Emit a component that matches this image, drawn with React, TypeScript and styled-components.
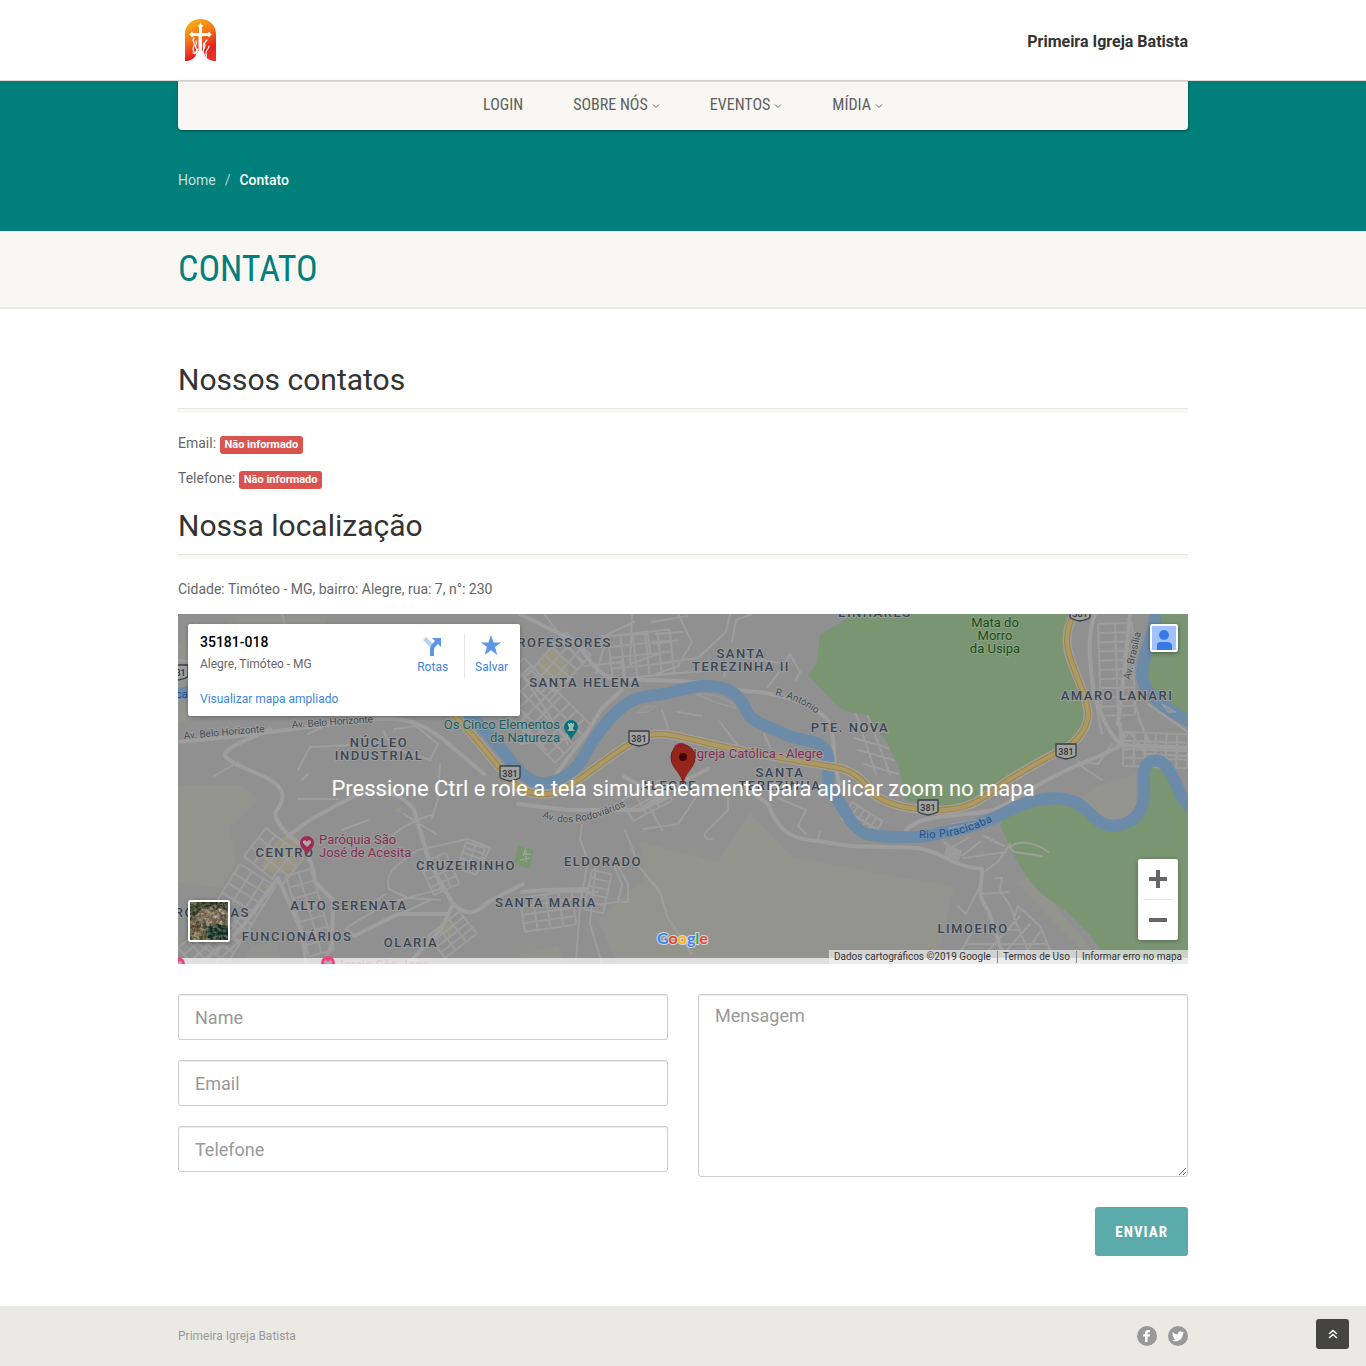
import React from "react";
import styled, { createGlobalStyle } from "styled-components";

const GlobalStyle = createGlobalStyle`
  *, *::before, *::after { box-sizing: border-box; }
  body {
    margin: 0;
    background: #fff;
    color: #666;
    font: 14px/20px Roboto, "Liberation Sans", sans-serif;
  }
  a { color: inherit; text-decoration: none; }
`;

const condensed = `"Roboto Condensed", Roboto, "Liberation Sans Narrow", sans-serif`;

const Container = styled.div`
  width: 100%;
  max-width: 1040px;
  margin: 0 auto;
  padding: 0 15px;
`;

/* ---------- header ---------- */

const TopBar = styled.header`
  border-bottom: 1px solid #dddcd8;
  background: #fff;
`;

const TopRow = styled(Container)`
  display: flex;
  align-items: center;
  justify-content: space-between;
  height: 80px;
`;

const LogoLink = styled.a`
  display: block;
  padding: 0 6px;
  svg { display: block; }
`;

const ChurchName = styled.strong`
  padding-top: 3px;
  color: #333;
  font-size: 16px;
  font-weight: 700;
`;

const Hero = styled.div`
  background: #007f7b;
  height: 150px;
`;

const NavBar = styled.nav`
  display: flex;
  justify-content: center;
  gap: 50px;
  height: 49px;
  padding-top: 14px;
  border-radius: 0 0 4px 4px;
  background: #f8f7f3;
  box-shadow: inset 0 1px 0 #dddcd8, 0 1px 3px rgba(0, 0, 0, 0.4);
`;

const NavLink = styled.a`
  display: flex;
  align-items: center;
  gap: 4px;
  height: 20px;
  color: #5e5e5e;
  font-family: ${condensed};
  font-size: 16px;
  text-transform: uppercase;
`;

const Crumbs = styled.ol`
  display: flex;
  margin: 0;
  padding: 40px 0 0;
  list-style: none;
  color: #fff;
  li + li::before {
    content: "/";
    padding: 0 9px;
    color: #b5d3cf;
    font-weight: 400;
  }
`;

const Crumb = styled.li<{ $muted?: boolean }>`
  color: ${(p) => (p.$muted ? "#c8dfdb" : "#fff")};
  font-weight: ${(p) => (p.$muted ? 400 : 500)};
`;

const TitleBand = styled.div`
  border-bottom: 2px solid #e9e8e4;
  background: #f8f7f3;
`;

const PageTitle = styled.h1`
  margin: 0;
  padding: 18px 0;
  color: #007f7b;
  font-family: ${condensed};
  font-size: 36px;
  font-weight: 400;
  line-height: 40px;
  text-transform: uppercase;
`;

/* ---------- content ---------- */

const Main = styled.main`
  padding: 48px 0 50px;
`;

const SectionTitle = styled.h2`
  margin: 0 0 20px;
  padding: 6px 0 12px;
  border-bottom: 4px solid #f8f7f3;
  box-shadow: inset 0 -1px 0 #e7e6e1;
  color: #333;
  font-size: 30px;
  font-weight: 400;
  line-height: 34px;
`;

const Line = styled.p`
  margin: 0 0 15px;
`;

const Tag = styled.span`
  padding: 2px 5px 3px;
  border-radius: 3px;
  background: #d9534f;
  color: #fff;
  font-size: 11px;
  font-weight: 700;
  line-height: 11px;
`;

/* ---------- map ---------- */

const MapFrame = styled.section`
  position: relative;
  height: 350px;
  margin-bottom: 30px;
  overflow: hidden;
  background: #8f8f8f;
`;

const MapArt = styled.svg`
  display: block;
  width: 100%;
  height: 100%;
  font-family: Roboto, sans-serif;
`;

const ScrollHint = styled.p`
  position: absolute;
  inset: 0;
  display: flex;
  align-items: center;
  justify-content: center;
  margin: 0;
  color: #fff;
  font-size: 22px;
  line-height: 26px;
`;

const PlaceCard = styled.div`
  position: absolute;
  top: 10px;
  left: 10px;
  display: flex;
  justify-content: space-between;
  width: 332px;
  height: 92px;
  padding: 10px 0 0 12px;
  border-radius: 2px;
  background: #fff;
  box-shadow: 0 1px 4px rgba(0, 0, 0, 0.3);
  font-size: 12px;
  line-height: 16px;
`;

const PlaceText = styled.div`
  display: flex;
  flex-direction: column;
  align-items: flex-start;
`;

const PlaceName = styled.div`
  margin-bottom: 6px;
  color: #000;
  font-size: 14px;
  font-weight: 500;
`;

const MapLink = styled.a`
  margin-top: 19px;
  color: #3a84df;
`;

const PlaceActions = styled.div`
  display: flex;
`;

const PlaceAction = styled.button`
  display: flex;
  flex-direction: column;
  align-items: center;
  gap: 3px;
  height: 44px;
  padding: 0 12px 0 10px;
  border: 0;
  background: none;
  color: #3a84df;
  font: 12px/16px Roboto, sans-serif;
  svg { display: block; }
  & + & { border-left: 1px solid #e8e8e8; }
  &:first-child { padding-right: 16px; }
`;

const Corner = styled.button<{ $place: "account" | "layers" }>`
  position: absolute;
  ${(p) => (p.$place === "account" ? "top: 10px; right: 10px; width: 28px; height: 28px;" : "bottom: 22px; left: 10px; width: 42px; height: 42px;")}
  padding: 0;
  border: 2px solid #fff;
  border-radius: 2px;
  background: #a0c3ff;
  box-shadow: 0 1px 4px rgba(0, 0, 0, 0.4);
  overflow: hidden;
  svg { display: block; width: 100%; height: 100%; }
`;

const ZoomBox = styled.div`
  position: absolute;
  right: 10px;
  bottom: 24px;
  display: flex;
  flex-direction: column;
  width: 40px;
  padding: 0 5px;
  border-radius: 2px;
  background: #fff;
  box-shadow: 0 1px 4px rgba(0, 0, 0, 0.3);
`;

const ZoomButton = styled.button`
  display: flex;
  align-items: center;
  justify-content: center;
  height: 40px;
  padding: 0;
  border: 0;
  background: none;
  color: #666;
  & + & { height: 41px; border-top: 1px solid #e6e6e6; }
`;

const Credits = styled.div`
  position: absolute;
  right: 0;
  bottom: 0;
  display: flex;
  height: 14px;
  padding: 1px 0;
  background: rgba(245, 245, 245, 0.65);
  color: #333;
  font-size: 10px;
  line-height: 12px;
`;

const Credit = styled.a`
  padding: 0 6px 0 5px;
  & + & { border-left: 1px solid #888; }
`;

/* ---------- form ---------- */

const Form = styled.form`
  display: grid;
  grid-template-columns: 1fr 1fr;
  column-gap: 30px;
  row-gap: 30px;
`;

const Fields = styled.div`
  display: flex;
  flex-direction: column;
  gap: 20px;
`;

const fieldStyle = `
  display: block;
  width: 100%;
  border: 1px solid #ccc;
  border-radius: 3px;
  background: #fff;
  box-shadow: inset 0 1px 1px rgba(0, 0, 0, 0.075);
  color: #555;
  font: 18px/24px Roboto, sans-serif;
  &::placeholder { color: #999; opacity: 1; }
`;

const Input = styled.input`
  ${fieldStyle}
  height: 46px;
  padding: 10px 16px;
`;

const Message = styled.textarea`
  ${fieldStyle}
  height: 183px;
  padding: 9px 16px;
`;

const Submit = styled.button`
  grid-column: 2;
  justify-self: end;
  height: 49px;
  padding: 0 20px;
  border: 0;
  border-radius: 3px;
  background: #5aaba9;
  color: #fff;
  font: 700 15px/20px ${condensed};
  letter-spacing: 1px;
  text-transform: uppercase;
`;

/* ---------- footer ---------- */

const Footer = styled.footer`
  background: #eae9e4;
  color: #999;
  font-size: 12px;
`;

const FooterRow = styled(Container)`
  display: flex;
  align-items: center;
  justify-content: space-between;
  height: 60px;
`;

const Social = styled.div`
  display: flex;
  gap: 11px;
`;

const SocialLink = styled.a`
  display: flex;
  align-items: center;
  justify-content: center;
  width: 20px;
  height: 20px;
  border-radius: 50%;
  background: #999;
  color: #fff;
`;

const ToTop = styled.button`
  position: fixed;
  right: 17px;
  bottom: 17px;
  display: flex;
  align-items: center;
  justify-content: center;
  width: 33px;
  height: 30px;
  padding: 0;
  border: 0;
  border-radius: 3px;
  background: #444441;
  color: #fff;
`;

/* ---------- drawings ---------- */

const Logo = () => (
  <svg width="33" height="44" viewBox="0 0 33 44" role="img" aria-label="Primeira Igreja Batista">
    <defs>
      <linearGradient id="flame" x1="0.2" y1="0" x2="0.6" y2="1">
        <stop offset="0" stopColor="#f9b710" />
        <stop offset="0.45" stopColor="#f0701c" />
        <stop offset="0.8" stopColor="#e4201f" />
        <stop offset="1" stopColor="#e8302a" />
      </linearGradient>
    </defs>
    <path d="M1 43V16C1 7 8 1 16.500 1S32 7 32 16V43C27 43 23 41 21 38L19 33H14L12 37C10 41 6 43 1 43Z" fill="url(#flame)" />
    <g fill="#fff">
      <path d="M15 9 13.500 7.500 15 7 16.500 5 18 7 19.500 7.500 18 9V15H24L25 13.500 26 15 28 16.500 26 18 25 19.500 24 18H18V40H14.500V18H9L8 19.500 7 18 5 16.500 7 15 8 13.500 9 15H15Z" />
    </g>
    <g fill="none" stroke="#fff" strokeWidth="1.200" strokeLinecap="round">
      <path d="M10 20c-3 3 2 5 0 8s-1 5 1 7M12 23c2 3-2 5 0 7s1 3-1 5" />
      <path d="M23 22c-5 4 0 5-3 9s1 3 0 8M25 28c0 3-3 4-3 7s1 2 0 4M20 25c-2 4 1 5-1 8M9 35c3 2 5-1 4-4" />
    </g>
  </svg>
);

const Caret = () => (
  <svg width="8" height="8" viewBox="0 0 8 8" fill="none" stroke="#666" aria-hidden="true">
    <path d="M1 3.500 4 6.500 7 3.500" />
  </svg>
);

type LabelProps = { x: number; y: number; text: string; anchor?: "start" | "middle" | "end" };

const Area = ({ x, y, text, anchor = "middle" }: LabelProps) => (
  <text x={x} y={y} textAnchor={anchor} fontSize="13" fontWeight="500" letterSpacing="1.500" fill="#3b4654" stroke="#9d9d9d" strokeWidth="2" paintOrder="stroke">
    {text}
  </text>
);

const Place = ({ x, y, text, anchor = "start", color }: LabelProps & { color: string }) => (
  <text x={x} y={y} textAnchor={anchor} fontSize="13" fill={color} stroke="#9d9d9d" strokeWidth="2" paintOrder="stroke">
    {text}
  </text>
);

const Shield = ({ x, y }: { x: number; y: number }) => (
  <g transform={`translate(${x} ${y})`}>
    <path d="M-10-7H10V4Q10 6 0 8Q-10 6-10 4Z" fill="#a1a1a1" stroke="#383e43" strokeWidth="1.300" strokeLinejoin="round" />
    <text y="4" textAnchor="middle" fontSize="9" fontWeight="500" fill="#333">381</text>
  </g>
);

const HeartPin = ({ x, y, color }: { x: number; y: number; color: string }) => (
  <g transform={`translate(${x} ${y})`}>
    <path d="M0 12C-2 7-7 5-7 0A7 7 0 0 1 7 0C7 5 2 7 0 12Z" fill={color} />
    <path d="M0 4-4 0C-5-3-1-4 0-1 1-4 5-3 4 0Z" fill="#b9a7ae" />
  </g>
);

type GridProps = { x: number; y: number; w: number; h: number; turn: number; cols: number; rows: number };

/* a neighbourhood of parallel streets */
const Blocks = ({ x, y, w, h, turn, cols, rows }: GridProps) => {
  let d = "";
  for (let i = 0; i <= cols; i++) d += `M${(w * i) / cols} 0V${h}`;
  for (let j = 0; j <= rows; j++) d += `M0 ${(h * j) / rows}H${w}`;
  return <path d={d} transform={`translate(${x} ${y}) rotate(${turn})`} />;
};

const river =
  "M-2 80 12 78M286 95C300 108 318 128 332 146C342 158 352 170 366 169C384 168 396 158 405 144C414 127 426 109 442 95C454 84 466 82 486 80C500 77 512 72 528 72C548 72 562 80 568 96C574 110 592 112 606 120C622 128 646 124 650 142C652 158 646 170 658 184C668 196 672 212 688 220C704 223 744 226 762 219C792 214 814 206 832 196C852 186 882 178 902 191C914 199 920 212 936 212C952 210 966 202 966 178V158C968 146 980 142 989 153C999 165 1000 184 1012 192M977-3C978 22 964 38 964 62C966 80 984 92 1012 108";
const highway =
  "M270 95C292 116 306 136 322 154C336 174 354 184 376 179C404 168 428 142 462 124C478 116 496 121 525 128C565 138 615 146 650 152C678 155 686 168 698 182C716 194 742 196 760 196C796 196 806 182 832 165C852 153 866 145 880 138C900 130 914 110 909 92C904 68 890 48 889 28C889 14 892 8 898-4";

const MapPicture = () => (
  <MapArt viewBox="0 0 1010 350" preserveAspectRatio="xMidYMid slice" role="img" aria-label="Mapa de Alegre, Timóteo - MG">
    <defs>
      <path id="rodoviarios" d="M364 203Q396 219 456 188" />
      <path id="piracicaba" d="M741 224Q782 226 820 204" />
      <path id="antonio" d="M597 81Q622 86 644 104" />
    </defs>
    <rect width="1010" height="350" fill="#909090" />

    <g fill="#94948f">
      <path d="M0 171H62L80 186 52 214 58 248 44 274 0 268Z" />
      <path d="M462 228 540 248 572 199 614 243 682 256 776 273 758 350H440L420 306 448 280 466 266Z" />
      <path d="M0 30 60 4H150L118 60 40 100 0 108Z" />
      <path d="M62 350 74 332 98 328 104 350ZM342 340 380 332 386 350H342Z" />
      <path d="M900 188 915 174 958 160V200L935 208 920 204Z" />
      <path d="M838 268 852 262 922 345H912Z" />
    </g>
    <g fill="#999684">
      <path d="M83 252 98 228 114 216 128 240 114 256 96 260ZM84 268 98 274 92 282ZM258 318 264 306 276 312 272 322ZM360 52 376 30 392 58 372 80ZM218 194H224V198H218Z" />
    </g>
    <g fill="#7a9571">
      <path d="M682 0 670 4 642 21 639 49 630 61 660 93 672 98 689 101 709 129 722 156 727 186 760 194 796 188 830 166 880 138 902 126 910 103 902 76 889 43 889 23 895 0Z" />
      <path d="M822 211 835 194 872 188 905 193 922 209 935 213 959 203 965 171 974 150 989 160 1003 180 1010 190V350H934L912 321 889 298 859 276 839 248 832 233Z" />
      <path d="M974 0H1010V106L969 79 962 59Z" />
      <path d="M340 231 355 236 352 255 336 250Z" />
    </g>

    <g fill="none" stroke="#9e9e9e" strokeWidth="2" strokeLinecap="round" strokeLinejoin="round">
      <g strokeWidth="4">
        <path d="M0 128 60 122 130 113 192 106C225 101 246 110 266 126L306 160" />
        <path d="M92 115C76 124 45 133 47 142C55 153 86 159 98 170C110 181 103 190 97 199C98 210 110 222 122 230C130 240 136 251 137 268L155 286 154 330 145 350" />
        <path d="M342 0 370 14 398 28C410 44 418 58 434 65L500 67C530 68 548 76 580 78C610 82 632 90 648 104C660 120 652 145 662 170" />
        <path d="M110 222 135 204 180 180C205 174 225 180 236 196L252 250 275 290C290 304 300 298 310 288L345 270" />
        <path d="M568 174 590 190C600 216 612 224 632 226L672 232 740 234C770 240 772 252 804 255C806 266 796 278 810 296L828 350" />
        <path d="M100 264 124 318 128 350M100 264 62 316 22 350M344 278 368 276 408 275M275 290 264 314 230 350M176 322 220 300 270 300" />
        <path d="M728 216C746 198 780 204 816 196 850 180 860 166 924 141L944 131 942 110M944 131 1010 134" />
        <path d="M917 0C908 20 912 54 916 80 924 102 928 115 942 130M952 0 946 60 940 110M342 160 360 173 374 166 408 120 424 94 444 76" />
        <path d="M446 163 488 184 462 196 390 196 340 190M462 196 500 170 530 155" />
      </g>
      <path d="M404 211 402 225 410 247 402 290 398 348M447 216 462 254 482 278 490 304 514 340M360 288 372 278H420M418 250 412 310 424 350M436 252 444 270 440 288 424 290M440 252 450 270V288H444" />
      <path d="M211 275C206 260 218 250 240 236L290 225 312 234 304 250M211 275 230 284 262 286M168 314 208 290 262 275M168 314 176 322 252 286M184 296 208 280" />
      <path d="M120 156 132 133 198 130M124 166 130 160M104 0 112 26 140 30 M36 162 60 148M130 120 150 110M216 115 238 112 260 130 252 146 234 140 214 134 206 118M262 150 260 184 254 204" />
      <path d="M480 40 452 50 454 0M424 22 470 20 472 38M476 50 520 44 548 18 552 0M500 0 514 28 500 52 478 60M554 28 558 6 574 0M474 8 510 2M478 20 504 18M476 30 500 26" />
      <path d="M590 73 604 54 612 40 622 58 618 66M568 44 610 50M546 62 548 50M446 68 444 48 406 52 366 0M418 60 430 20 456 8" />
      <path d="M466 215 500 210 520 180M472 194 484 216 M550 184V196L532 214C522 222 528 226 534 225M600 184 628 196 620 212 628 220M640 225 642 218M490 60 540 56M484 96 490 114M500 98 524 102M542 108 560 132M586 120 596 142" />
      <path d="M772 234 790 224M766 228 776 236M832 230 820 248 808 256M832 233C840 226 858 228 870 238M832 233 836 238 864 242M806 222 826 232M786 244 828 238M784 242 802 228" />
      <path d="M802 272 788 300 780 292M804 280 830 278M818 264H824L822 276 832 292 836 302M840 292 862 312 878 350M840 292 836 304 856 350M842 302 798 350M852 310 822 344M862 318 840 350M796 316H842M790 330H868M776 350 794 318" />
      <path d="M934 130 920 150 900 148M940 130 952 118 968 140 1010 142M916 80 924 120M970 90 1010 118M960 104 974 134M956 88 970 128M924 166 900 150" />
      <path d="M678 100 698 160M672 110 706 118M676 124 710 134M680 136 716 146M686 150 720 160M690 102 712 160M204 178 230 174M120 185H160M226 200 258 220M164 216 190 206M256 200C230 208 210 220 200 240" />
      <path d="M0 46 40 50M18 10 72 96M40 60 140 24M344 60 390 130M342 130 392 124M368 136 344 110" />
    </g>
    <g fill="none" stroke="#9d9d9d" strokeWidth="2">
      <Blocks x={920} y={10} w={34} h={92} turn={-2} cols={2} rows={10} />
      <Blocks x={346} y={44} w={96} h={52} turn={45} cols={9} rows={4} />
      <Blocks x={346} y={64} w={62} h={34} turn={-48} cols={6} rows={3} />
      <Blocks x={430} y={22} w={62} h={44} turn={-6} cols={5} rows={4} />
      <Blocks x={88} y={214} w={48} h={36} turn={38} cols={4} rows={3} />
      <Blocks x={62} y={250} w={42} h={90} turn={32} cols={3} rows={8} />
      <Blocks x={108} y={262} w={26} h={84} turn={-16} cols={2} rows={7} />
      <Blocks x={242} y={250} w={28} h={34} turn={-24} cols={3} rows={4} />
      <Blocks x={414} y={256} w={20} h={40} turn={12} cols={1} rows={5} />
      <Blocks x={288} y={228} w={20} h={28} turn={18} cols={2} rows={5} />
      <Blocks x={444} y={186} w={44} h={24} turn={-28} cols={3} rows={2} />
      <Blocks x={674} y={188} w={36} h={20} turn={32} cols={5} rows={2} />
      <Blocks x={946} y={118} w={64} h={34} turn={2} cols={6} rows={4} />
      <Blocks x={342} y={284} w={52} h={34} turn={-8} cols={4} rows={4} />
      <Blocks x={250} y={322} w={40} h={28} turn={-38} cols={3} rows={4} />
      <Blocks x={0} y={334} w={62} h={36} turn={-42} cols={5} rows={4} />
      <Blocks x={770} y={232} w={14} h={9} turn={20} cols={3} rows={4} />
    </g>

    <path d={river} fill="none" stroke="#6b8ba8" strokeWidth="12" strokeLinejoin="round" />
    <path d="M518 80C532 78 554 86 558 94L536 88ZM458 99 466 93 478 92 470 98ZM984 90 998 98 990 98Z" fill="#919191" stroke="#9e9e9e" />
    <path d="M772 210 812 203M768 215 800 208" stroke="#929da6" fill="none" />

    <g fill="none">
      <path d={highway} stroke="#9f9f9f" strokeWidth="9" />
      <path d={highway} stroke="#a6833f" strokeWidth="6" />
      <path d={highway} stroke="#aa9a66" strokeWidth="4" />
    </g>

    <Shield x={461} y={124} />
    <Shield x={332} y={159} />
    <Shield x={888} y={137} />
    <Shield x={750} y={193} />
    <Shield x={902} y={-1} />
    <Shield x={0} y={58} />

    <Area x={434} y={33} text="PROFESSORES" anchor="end" />
    <Area x={407} y={73} text="SANTA HELENA" />
    <Area x={563} y={44} text="SANTA" />
    <Area x={563} y={57} text="TEREZINHA II" />
    <Area x={697} y={3} text="LINHARES" />
    <Area x={672} y={118} text="PTE. NOVA" />
    <Area x={939} y={86} text="AMARO LANARI" />
    <Area x={201} y={133} text="NÚCLEO" />
    <Area x={201} y={146} text="INDUSTRIAL" />
    <Area x={602} y={163} text="SANTA" />
    <Area x={602} y={176} text="TEREZINHA" />
    <Area x={491} y={176} text="ALEGRE" />
    <Area x={107} y={243} text="CENTRO" />
    <Area x={288} y={256} text="CRUZEIRINHO" />
    <Area x={425} y={252} text="ELDORADO" />
    <Area x={171} y={296} text="ALTO SERENATA" />
    <Area x={368} y={293} text="SANTA MARIA" />
    <Area x={72} y={303} text="BROMÉLIAS" anchor="end" />
    <Area x={119} y={327} text="FUNCIONÁRIOS" />
    <Area x={233} y={333} text="OLARIA" />
    <Area x={795} y={319} text="LIMOEIRO" />

    <Place x={382} y={115} text="Os Cinco Elementos" anchor="end" color="#175e66" />
    <Place x={382} y={128} text="da Natureza" anchor="end" color="#175e66" />
    <Place x={645} y={144} text="Igreja Católica - Alegre" anchor="end" color="#842f50" />
    <Place x={141} y={230} text="Paróquia São" color="#842f50" />
    <Place x={141} y={243} text="José de Acesita" color="#842f50" />
    <Place x={162} y={355} text="Igreja São José" color="#a83560" />
    <g fontSize="13" textAnchor="middle" fill="#174e1c" stroke="#8ba184" strokeWidth="2" paintOrder="stroke">
      <text x="817" y="13">Mata do</text>
      <text x="817" y="26">Morro</text>
      <text x="817" y="39">da Usipa</text>
    </g>
    <g fontSize="10" fill="#454b52" stroke="#9e9e9e" strokeWidth="2" paintOrder="stroke">
      <text transform="translate(6 125) rotate(-5)">Av. Belo Horizonte</text>
      <text transform="translate(114 114) rotate(-4)">Av. Belo Horizonte</text>
      <text transform="translate(952 66) rotate(-77)">Av. Brasília</text>
      <text><textPath href="#antonio">R. António</textPath></text>
      <text><textPath href="#rodoviarios">Av. dos Rodoviários</textPath></text>
    </g>
    <text x="-8" y="84" fontSize="11" fill="#25508c">aca</text>
    <text fontSize="11" letterSpacing="0.500" fill="#25508c"><textPath href="#piracicaba">Rio Piracicaba</textPath></text>

    <g transform="translate(393 113)">
      <path d="M0 13C-2 7-7 5-7 0A7 7 0 0 1 7 0C7 5 2 7 0 13Z" fill="#08737c" />
      <path d="M-3-4H-2V-3H-1V-4H1V-3H2V-4H3V-1L2 0V2L4 4H-4L-2 2V0L-3-1Z" fill="#a7b4b6" />
    </g>
    <path d="M345 242 348 233M345 240H353M348 248V236M342 246 352 244" stroke="#a0a99d" />
    <HeartPin x={129} y={229} color="#9c2c51" />

    <circle cx="503" cy="137" r="8" fill="#9b1f4b" />
    <path d="M505 170C504 158 493 155 493 143A12 12 0 0 1 517 143C517 155 506 158 505 170Z" fill="#94261d" stroke="#7e1c17" />
    <circle cx="505" cy="143" r="4" fill="#400705" />

    <rect y="344" width="1010" height="6" fill="#fff" fillOpacity="0.700" />
    <HeartPin x={150} y={349} color="#ef4478" />
    <HeartPin x={0} y={350} color="#ef4478" />

    <text x="479" y="330" fontFamily="Lato, Roboto, sans-serif" fontSize="16" fontWeight="700" stroke="#d6d6d6" strokeWidth="2" paintOrder="stroke">
      <tspan fill="#4285f4">G</tspan>
      <tspan fill="#ea4335">o</tspan>
      <tspan fill="#fbbc05">o</tspan>
      <tspan fill="#4285f4">g</tspan>
      <tspan fill="#34a853">l</tspan>
      <tspan fill="#ea4335">e</tspan>
    </text>
  </MapArt>
);

const Satellite = () => (
  <svg viewBox="0 0 38 38" aria-hidden="true">
    <defs>
      <filter id="ground" x="0" y="0" width="100%" height="100%" colorInterpolationFilters="sRGB">
        <feTurbulence type="fractalNoise" baseFrequency="0.300" numOctaves="3" seed="8" />
        <feColorMatrix values="2 0 0 0 -0.65  2 0 0 0 -0.68  2 0 0 0 -0.75  0 0 0 0 0.35" />
      </filter>
    </defs>
    <rect width="38" height="38" fill="#77705a" />
    <path d="M0 0H38V7L28 9 20 4 8 10 0 18Z" fill="#3f4d33" />
    <path d="M8 12 18 7 30 12 32 20 22 24 10 18Z" fill="#9d8b76" />
    <path d="M18 24 28 22 38 25V38H20L14 31Z" fill="#153d33" />
    <path d="M0 22 8 20 15 28 17 38H0Z" fill="#776b4a" />
    <path d="M28 6 36 8 34 12 29 10ZM5 30 10 32 8 36 3 34Z" fill="#b5aa93" />
    <rect width="38" height="38" filter="url(#ground)" />
  </svg>
);

const links = [
  { label: "Login", menu: false },
  { label: "Sobre nós", menu: true },
  { label: "Eventos", menu: true },
  { label: "Mídia", menu: true },
];

export default function App() {
  return (
    <>
      <GlobalStyle />
      <TopBar>
        <TopRow>
          <LogoLink href="#"><Logo /></LogoLink>
          <ChurchName>Primeira Igreja Batista</ChurchName>
        </TopRow>
      </TopBar>

      <Hero>
        <Container>
          <NavBar aria-label="Principal">
            {links.map((link) => (
              <NavLink key={link.label} href="#">
                {link.label}
                {link.menu && <Caret />}
              </NavLink>
            ))}
          </NavBar>
          <Crumbs>
            <Crumb $muted><a href="#">Home</a></Crumb>
            <Crumb>Contato</Crumb>
          </Crumbs>
        </Container>
      </Hero>

      <TitleBand>
        <Container>
          <PageTitle>Contato</PageTitle>
        </Container>
      </TitleBand>

      <Main>
        <Container>
          <SectionTitle>Nossos contatos</SectionTitle>
          <Line>Email: <Tag>Não informado</Tag></Line>
          <Line>Telefone: <Tag>Não informado</Tag></Line>

          <SectionTitle>Nossa localização</SectionTitle>
          <Line>Cidade: Timóteo - MG, bairro: Alegre, rua: 7, n°: 230</Line>

          <MapFrame aria-label="Mapa">
            <MapPicture />
            <ScrollHint>Pressione Ctrl e role a tela simultaneamente para aplicar zoom no mapa</ScrollHint>
            <PlaceCard>
              <PlaceText>
                <PlaceName>35181-018</PlaceName>
                <div>Alegre, Timóteo - MG</div>
                <MapLink href="#">Visualizar mapa ampliado</MapLink>
              </PlaceText>
              <PlaceActions>
                <PlaceAction type="button">
                  <svg width="22" height="22" viewBox="0 0 22 22" aria-hidden="true">
                    <path d="M1 6 4 3 11 10 8 13Z" fill="#b6d1f6" />
                    <path d="M8 22V15Q8 12 10 10L13 7 10 4H19V13L16 10 13 13Q12 14 12 16V22Z" fill="#5b97e5" />
                  </svg>
                  Rotas
                </PlaceAction>
                <PlaceAction type="button">
                  <svg width="22" height="22" viewBox="0 0 22 22" aria-hidden="true">
                    <path d="M10 1 12.500 8.500H20L14 13 16.300 21 10 16.300 3.700 21 6 13 0 8.500H7.500Z" fill="#5b97e5" />
                  </svg>
                  Salvar
                </PlaceAction>
              </PlaceActions>
            </PlaceCard>
            <Corner $place="account" type="button" aria-label="Conta">
              <svg viewBox="0 0 24 24">
                <circle cx="12" cy="9" r="5" fill="#3b78e7" />
                <path d="M5 24V19Q5 16 9 16H15Q19 16 20 19V24Z" fill="#3b78e7" />
              </svg>
            </Corner>
            <Corner $place="layers" type="button" aria-label="Satélite"><Satellite /></Corner>
            <ZoomBox>
              <ZoomButton type="button" aria-label="Aumentar o zoom">
                <svg width="18" height="18" viewBox="0 0 18 18"><path d="M7 0H11V7H18V11H11V18H7V11H0V7H7Z" fill="currentColor" /></svg>
              </ZoomButton>
              <ZoomButton type="button" aria-label="Diminuir o zoom">
                <svg width="18" height="18" viewBox="0 0 18 18"><path d="M0 7H18V11H0Z" fill="currentColor" /></svg>
              </ZoomButton>
            </ZoomBox>
            <Credits>
              <Credit href="#">Dados cartográficos ©2019 Google</Credit>
              <Credit href="#">Termos de Uso</Credit>
              <Credit href="#">Informar erro no mapa</Credit>
            </Credits>
          </MapFrame>

          <Form onSubmit={(e) => e.preventDefault()}>
            <Fields>
              <Input type="text" name="name" placeholder="Name" aria-label="Name" />
              <Input type="email" name="email" placeholder="Email" aria-label="Email" />
              <Input type="tel" name="phone" placeholder="Telefone" aria-label="Telefone" />
            </Fields>
            <Message name="message" placeholder="Mensagem" aria-label="Mensagem" />
            <Submit type="submit">Enviar</Submit>
          </Form>
        </Container>
      </Main>

      <Footer>
        <FooterRow>
          <span>Primeira Igreja Batista</span>
          <Social>
            <SocialLink href="#" aria-label="Facebook">
              <svg width="8" height="12" viewBox="0 0 8 12"><path d="M2 12V6.500H0V4.300H2V2.800C2 1 3.200 0 5 0H7V2.200H5.500C4.800 2.200 4.600 2.500 4.600 3V4.300H7L6.700 6.500H4.600V12Z" fill="currentColor" /></svg>
            </SocialLink>
            <SocialLink href="#" aria-label="Twitter">
              <svg width="12" height="11" viewBox="0 0 24 22"><path d="M24 3.200c-.9.400-1.800.7-2.800.8 1-.6 1.800-1.600 2.200-2.700-1 .6-2 1-3.100 1.200a4.900 4.900 0 0 0-8.400 4.500C7.700 6.800 4.100 4.900 1.700 1.900a4.900 4.900 0 0 0 1.500 6.600c-.8 0-1.600-.2-2.200-.6v.1c0 2.400 1.700 4.400 3.900 4.800-.7.200-1.500.2-2.200.1.600 2 2.400 3.400 4.600 3.400A9.900 9.900 0 0 1 0 18.300a14 14 0 0 0 21.500-12.500c1-.7 1.800-1.600 2.500-2.600z" fill="currentColor" /></svg>
            </SocialLink>
          </Social>
        </FooterRow>
      </Footer>

      <ToTop type="button" aria-label="Voltar ao topo">
        <svg width="10" height="10" viewBox="0 0 10 10" fill="none" stroke="currentColor" strokeWidth="1.500"><path d="M1 5 5 1.500 9 5M1 9 5 5.500 9 9" /></svg>
      </ToTop>
    </>
  );
}
